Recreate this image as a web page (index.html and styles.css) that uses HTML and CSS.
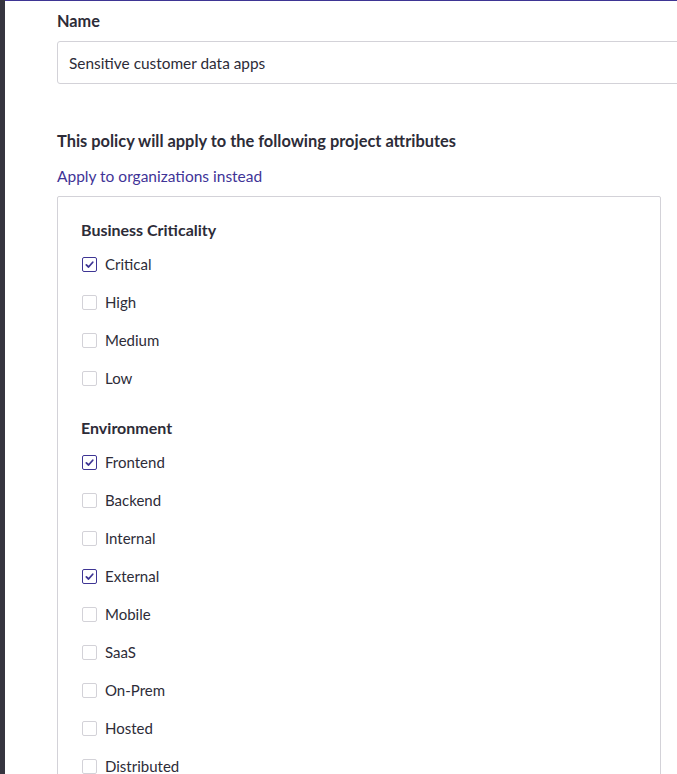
FILE: index.html
```html
<!DOCTYPE html>
<html>
<head>
<meta charset="utf-8">
<link rel="stylesheet" href="styles.css">
</head>
<body>
<div class="app">
  <div class="sidebar"></div>
  <main class="main">
    <div class="field">
      <label class="label">Name</label>
      <div class="input">Sensitive customer data apps</div>
    </div>
    <h2 class="heading">This policy will apply to the following project attributes</h2>
    <a class="link" href="#">Apply to organizations instead</a>
    <div class="box">
      <div class="group">
        <div class="group-title">Business Criticality</div>
        <div class="row"><span class="cb checked"><svg viewBox="0 0 14 14"><path d="M3.6 7.4 L6 9.7 L10.5 4.6"/></svg></span><span>Critical</span></div>
        <div class="row"><span class="cb"></span><span>High</span></div>
        <div class="row"><span class="cb"></span><span>Medium</span></div>
        <div class="row"><span class="cb"></span><span>Low</span></div>
      </div>
      <div class="group">
        <div class="group-title">Environment</div>
        <div class="row"><span class="cb checked"><svg viewBox="0 0 14 14"><path d="M3.6 7.4 L6 9.7 L10.5 4.6"/></svg></span><span>Frontend</span></div>
        <div class="row"><span class="cb"></span><span>Backend</span></div>
        <div class="row"><span class="cb"></span><span>Internal</span></div>
        <div class="row"><span class="cb checked"><svg viewBox="0 0 14 14"><path d="M3.6 7.4 L6 9.7 L10.5 4.6"/></svg></span><span>External</span></div>
        <div class="row"><span class="cb"></span><span>Mobile</span></div>
        <div class="row"><span class="cb"></span><span>SaaS</span></div>
        <div class="row"><span class="cb"></span><span>On-Prem</span></div>
        <div class="row"><span class="cb"></span><span>Hosted</span></div>
        <div class="row"><span class="cb"></span><span>Distributed</span></div>
      </div>
    </div>
  </main>
</div>
</body>
</html>
```
FILE: styles.css
```css
html, body {
  margin: 0;
  padding: 0;
  background: #ffffff;
  overflow: hidden;
  height: 774px;
}
body {
  font-family: Lato, "Open Sans", sans-serif;
  color: #2d2c38;
  font-size: 15px;
}
.app {
  display: flex;
  height: 774px;
  overflow: hidden;
}
.sidebar {
  width: 5px;
  flex: 0 0 5px;
  background: #36353f;
}
.main {
  flex: 1;
  border-top: 1px solid #3e3594;
  padding: 10px 0 0 52px;
  min-width: 0;
  overflow: hidden;
}
.field {
  display: flex;
  flex-direction: column;
}
.label {
  font-weight: 700;
  font-size: 16.3px;
  line-height: 20px;
  height: 20px;
  margin-bottom: 10px;
}
.input {
  width: 640px;
  height: 41px;
  box-sizing: content-box;
  border: 1px solid #d3d2d8;
  border-radius: 3px;
  padding: 0 11px;
  display: flex;
  align-items: center;
  font-size: 15.4px;
}
.heading {
  margin: 47px 0 0;
  font-size: 16.4px;
  font-weight: 700;
  line-height: 20px;
}
.link {
  display: block;
  margin-top: 15px;
  color: #3f3497;
  text-decoration: none;
  font-size: 15.5px;
  line-height: 20px;
}
.box {
  margin-top: 10px;
  width: 604px;
  box-sizing: border-box;
  border: 1px solid #d3d2d8;
  border-radius: 2px;
  padding: 23px 0 0 23px;
  min-height: 620px;
}
.group + .group {
  margin-top: 21px;
}
.group-title {
  font-weight: 700;
  font-size: 16px;
  line-height: 20px;
  margin-bottom: 5px;
}
.row {
  height: 38px;
  display: flex;
  align-items: center;
  gap: 8px;
  font-size: 15px;
}
.cb {
  width: 15px;
  height: 15px;
  box-sizing: border-box;
  border: 1px solid #d3d2d8;
  border-radius: 2px;
  margin-left: 1px;
  display: flex;
  align-items: center;
  justify-content: center;
  flex: 0 0 auto;
}
.cb.checked {
  border: 1.6px solid #3e3594;
}
.cb svg {
  width: 13px;
  height: 13px;
  fill: none;
  stroke: #3e3594;
  stroke-width: 1.9;
  stroke-linecap: round;
  stroke-linejoin: round;
}
```
